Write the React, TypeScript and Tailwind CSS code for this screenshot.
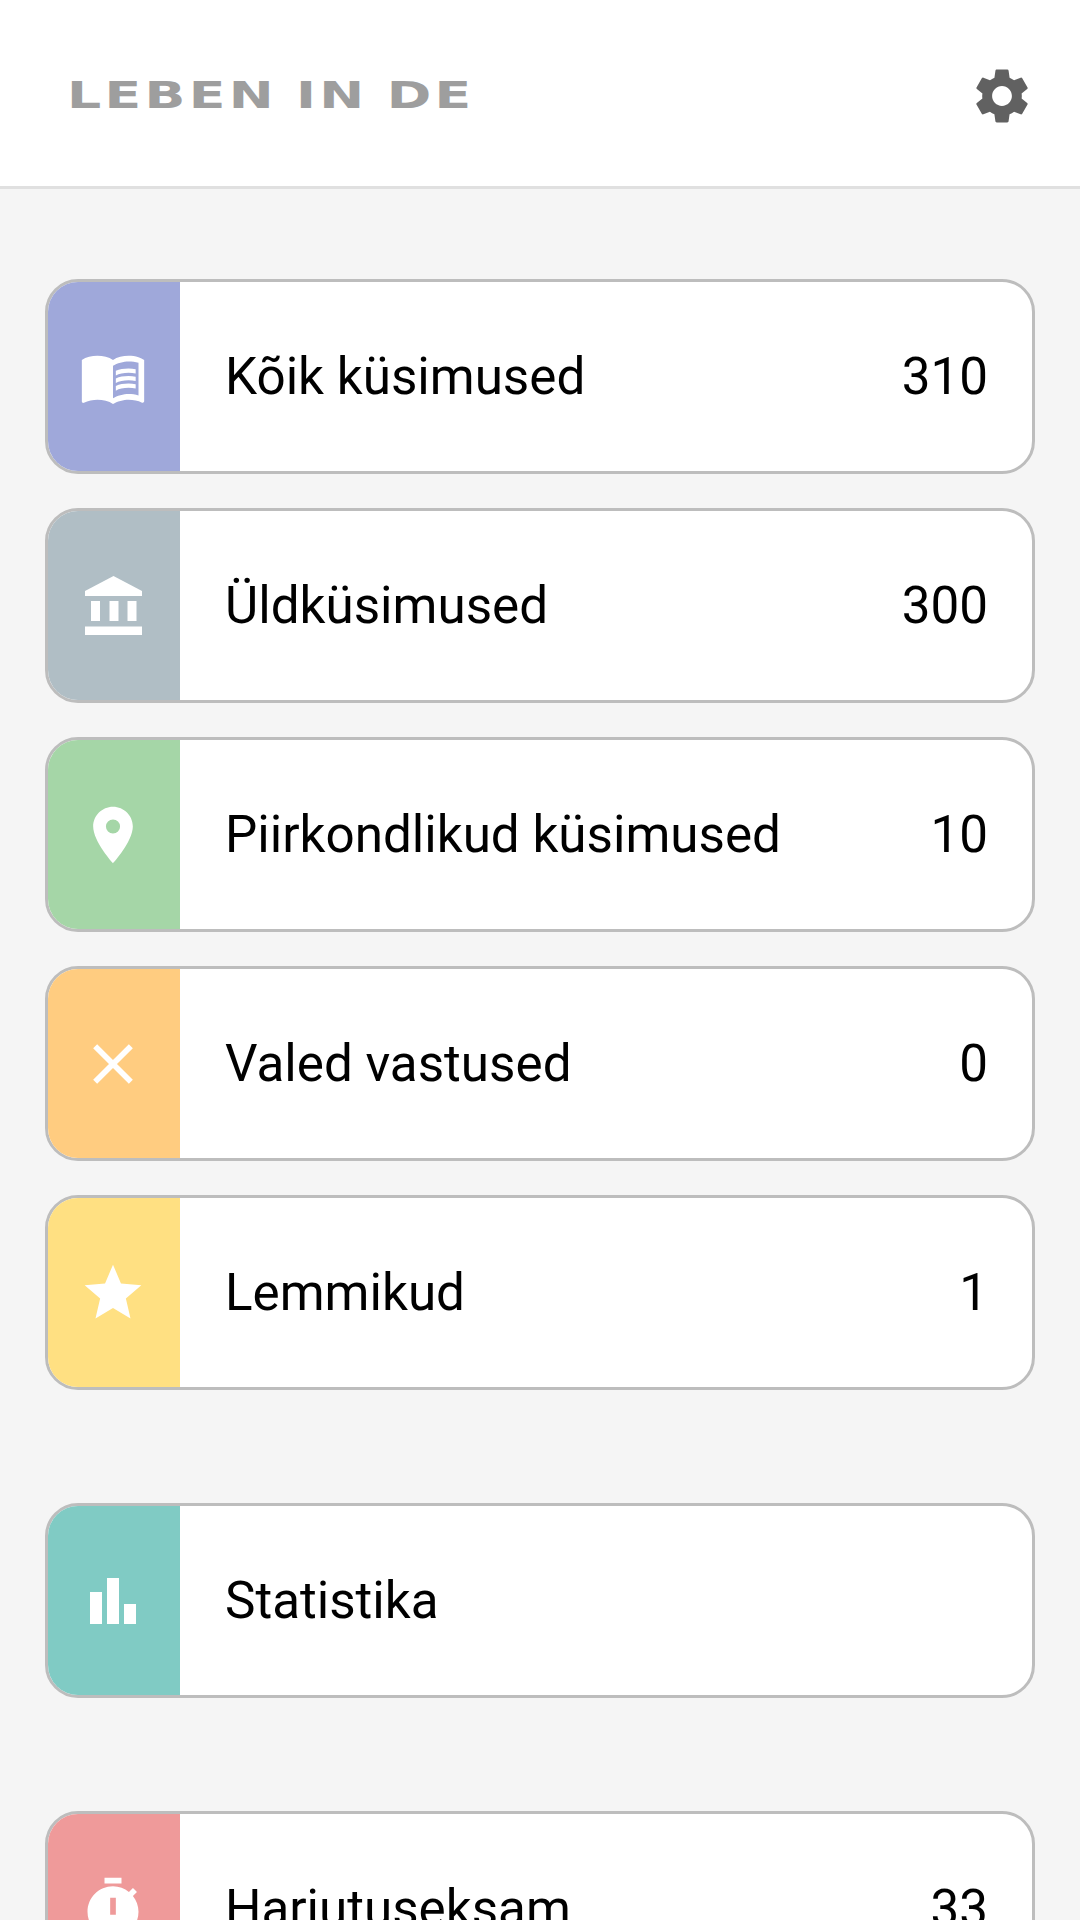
// App.tsx
// Question-bank menu: header with logo text and settings, then grouped category cards.

import type { ReactNode } from 'react';
import { MdClose, MdMenuBook, MdPlace, MdSettings, MdStar } from 'react-icons/md';

interface MenuCardProps {
  label: string;
  count?: number;
  panelClass: string;
  icon: ReactNode;
}

function BankIcon() {
  return (
    <svg width="57" height="59" viewBox="0 0 57 59" fill="#fff">
      <path d="M28.5 0 0 15v5h57v-5z" />
      <path d="M6 25h9v20H6zM24.5 25h9v20h-9zM42.5 25h9v20h-9zM0 50.5h57V59H0z" />
    </svg>
  );
}

function BarsIcon() {
  return (
    <svg width="46" height="46" viewBox="0 0 46 46" fill="#fff">
      <path d="M0 14h12v32H0zM17 0h12v46H17zM34 26h12v20H34z" />
    </svg>
  );
}

function TimerIcon() {
  return (
    <svg width="68" height="68" viewBox="0 0 24 24" fill="#fff">
      <path
        fillRule="evenodd"
        d="M15 1H9v2h6V1zM19.03 7.39l1.42-1.42c-.43-.51-.9-.99-1.41-1.41l-1.42 1.42C16.07 4.74 14.12 4 12 4c-4.97 0-9 4.03-9 9s4.02 9 9 9 9-4.03 9-9c0-2.12-.74-4.07-1.97-5.61zM13 14h-2V8h2v6z"
      />
    </svg>
  );
}

function MenuCard({ label, count, panelClass, icon }: MenuCardProps) {
  return (
    <div className="flex h-[195px] overflow-hidden rounded-[33px] border-[3px] border-[#bdbdbd] bg-white">
      <div className={`flex w-[132px] shrink-0 items-center justify-center pr-[2px] text-white ${panelClass}`}>
        {icon}
      </div>
      <div className="flex flex-1 items-center justify-between pl-[45px] pr-[44px] pt-[2px] text-[51.2px] text-black">
        <span>{label}</span>
        {count !== undefined && <span>{count}</span>}
      </div>
    </div>
  );
}

export default function App() {
  return (
    <div className="h-[1920px] w-[1080px] overflow-hidden bg-[#f5f5f5] font-['Roboto',sans-serif]">
      <header className="flex h-[189px] items-center justify-between border-b-[3px] border-[#e0e0e0] bg-white pl-[67px] pr-[45px] pt-[5px]">
        <span className="origin-left scale-x-[1.45] font-['DejaVu_Sans',sans-serif] text-[37px] font-bold tracking-[2.3px] [word-spacing:-2px] text-[#9e9e9e]">
          LEBEN IN DE
        </span>
        <MdSettings size={66} color="#616161" />
      </header>

      <main className="flex flex-col gap-[113px] px-[45px] pt-[90px]">
        <section className="flex flex-col gap-[34px]">
          <MenuCard label="Kõik küsimused" count={310} panelClass="bg-[#9fa8da]" icon={<MdMenuBook size={68} />} />
          <MenuCard label="Üldküsimused" count={300} panelClass="bg-[#b0bec5]" icon={<BankIcon />} />
          <MenuCard label="Piirkondlikud küsimused" count={10} panelClass="bg-[#a5d6a7]" icon={<MdPlace size={68} />} />
          <MenuCard label="Valed vastused" count={0} panelClass="bg-[#ffcc80]" icon={<MdClose size={68} />} />
          <MenuCard label="Lemmikud" count={1} panelClass="bg-[#ffe082]" icon={<MdStar size={68} />} />
        </section>
        <MenuCard label="Statistika" panelClass="bg-[#80cbc4]" icon={<BarsIcon />} />
        <MenuCard label="Harjutuseksam" count={33} panelClass="bg-[#ef9a9a]" icon={<TimerIcon />} />
      </main>
    </div>
  );
}
